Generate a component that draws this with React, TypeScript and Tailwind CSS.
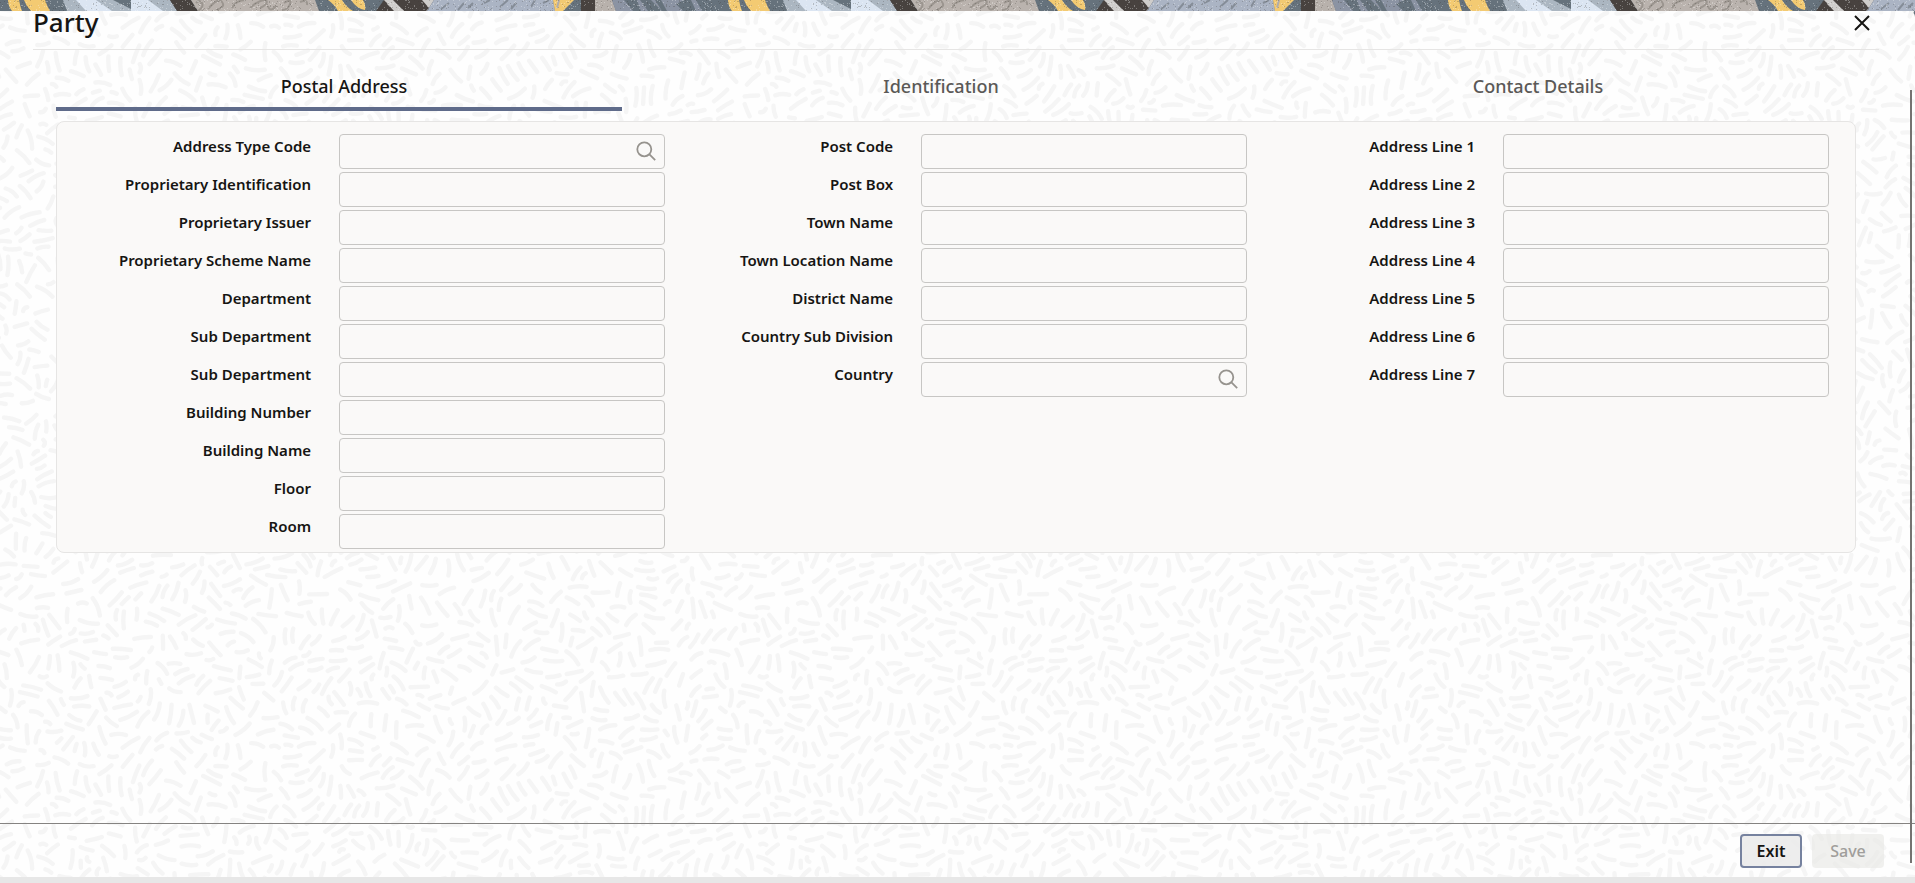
import { useId, useState } from "react";

type Field = { label: string; lookup?: boolean };

const TABS = ["Postal Address", "Identification", "Contact Details"];

const COLUMNS: Field[][] = [
  [
    { label: "Address Type Code", lookup: true },
    { label: "Proprietary Identification" },
    { label: "Proprietary Issuer" },
    { label: "Proprietary Scheme Name" },
    { label: "Department" },
    { label: "Sub Department" },
    { label: "Sub Department" },
    { label: "Building Number" },
    { label: "Building Name" },
    { label: "Floor" },
    { label: "Room" },
  ],
  [
    { label: "Post Code" },
    { label: "Post Box" },
    { label: "Town Name" },
    { label: "Town Location Name" },
    { label: "District Name" },
    { label: "Country Sub Division" },
    { label: "Country", lookup: true },
  ],
  [
    { label: "Address Line 1" },
    { label: "Address Line 2" },
    { label: "Address Line 3" },
    { label: "Address Line 4" },
    { label: "Address Line 5" },
    { label: "Address Line 6" },
    { label: "Address Line 7" },
  ],
];

function makeRandom(seed: number) {
  let s = seed;
  return () => {
    s = (s * 1664525 + 1013904223) % 4294967296;
    return s / 4294967296;
  };
}

const TILE = 720;

/* Short strokes that follow a smooth periodic direction field. */
function buildStrokes(): string {
  const rnd = makeRandom(77);
  const k = (Math.PI * 2) / TILE;
  const angle = (x: number, y: number) =>
    1.9 * Math.sin(k * (3 * x + 2 * y) + 0.6) +
    1.7 * Math.cos(k * (4 * y - 2 * x) + 1.9) +
    0.7 * Math.sin(k * (6 * x - 4 * y) + 4.2);
  const cell = 12;
  const n = TILE / cell;
  const grid: number[][][] = Array.from({ length: n * n }, () => []);
  const wrap = (v: number) => ((v % n) + n) % n;
  const delta = (v: number) => {
    const m = ((v % TILE) + TILE) % TILE;
    return m > TILE / 2 ? m - TILE : m;
  };
  const d: string[] = [];
  const attempts = 60000;
  for (let i = 0; i < attempts; i++) {
    const cx = rnd() * TILE;
    const cy = rnd() * TILE;
    const a = angle(cx, cy) + (rnd() - 0.5) * 0.25;
    const half = i < attempts / 2 ? 5.5 + rnd() * 4 : 2.5 + rnd() * 4;
    const ux = Math.cos(a);
    const uy = Math.sin(a);
    const pts = [-1, -0.5, 0, 0.5, 1].map((t) => [cx + ux * half * t, cy + uy * half * t]);
    const clear = pts.every(([px, py]) => {
      const gx = Math.floor(px / cell);
      const gy = Math.floor(py / cell);
      for (let dx = -1; dx <= 1; dx++)
        for (let dy = -1; dy <= 1; dy++)
          for (const [qx, qy] of grid[wrap(gx + dx) * n + wrap(gy + dy)]) {
            const ex = delta(px - qx);
            const ey = delta(py - qy);
            if (ex * ex + ey * ey < 50) return false;
          }
      return true;
    });
    if (!clear) continue;
    for (const p of pts) grid[wrap(Math.floor(p[0] / cell)) * n + wrap(Math.floor(p[1] / cell))].push(p);
    const bend = (rnd() - 0.5) * 5;
    const f = (v: number) => v.toFixed(1);
    const xs = [0, cx < 14 ? TILE : cx > TILE - 14 ? -TILE : 0];
    const ys = [0, cy < 14 ? TILE : cy > TILE - 14 ? -TILE : 0];
    for (const ox of new Set(xs))
      for (const oy of new Set(ys))
        d.push(
          `M${f(cx - ux * half + ox)} ${f(cy - uy * half + oy)}Q${f(cx - uy * bend + ox)} ${f(cy + ux * bend + oy)} ${f(cx + ux * half + ox)} ${f(cy + uy * half + oy)}`
        );
  }
  return d.join("");
}

const STROKES = buildStrokes();

function buildSpeckles(seed: number, count: number): string {
  const rnd = makeRandom(seed);
  let d = "";
  for (let i = 0; i < count; i++) d += `M${Math.floor(rnd() * 720)} ${Math.floor(rnd() * 11)}h1v1h-1z`;
  return d;
}

const LIGHT_SPECKLES = buildSpeckles(5, 520);
const DARK_SPECKLES = buildSpeckles(11, 420);

function Texture() {
  return (
    <svg className="absolute inset-0 h-full w-full" aria-hidden="true">
      <defs>
        <pattern id="strokes" width="720" height="720" patternUnits="userSpaceOnUse">
          <path d={STROKES} fill="none" stroke="#f5f5f5" strokeWidth="4.4" strokeLinecap="round" />
        </pattern>
      </defs>
      <rect width="100%" height="100%" fill="url(#strokes)" />
    </svg>
  );
}

function Banner() {
  return (
    <svg className="block h-[11px] w-full shrink-0" aria-hidden="true">
      <defs>
        <pattern id="banner" width="720" height="11" patternUnits="userSpaceOnUse">
          <rect width="720" height="11" fill="#66727c" />
          <path d="M8 0H19Q20 6 22 11H12Q8 6 8 0zM24 0H45Q47 6 50 11H31Q26 6 24 0z" fill="#f3ca72" />
          <path d="M63 0H170L177 11H67z" fill="#abb6c1" />
          <path d="M76 0H96L112 11H86zM131 0H148L163 11H131z" fill="#dbe5f2" />
          <path d="M113 0H131V9z" fill="#66727c" />
          <path d="M170 0H191L198 11H177z" fill="#48423f" />
          <path d="M191 0H315L319 11H198z" fill="#bab3ae" />
          <path
            d="M196 3q4-4 6 0t-4 8M208 9q10-12 14-7t-6 8M232 8q4-8 14-8M250 8q8-8 16-8q3 4-6 8M268 6q2 7 8 0M284 3q8-5 6 1t-8 6M300 2q8-3 7 3"
            fill="none"
            stroke="#9b958f"
            strokeWidth="2"
          />
          <path d="M328 0H342Q346 7 353 11H338Q334 4 328 0zM351 0H363Q366 5 365 10Q357 9 351 0z" fill="#f3ca72" />
          <path d="M384 0H434L427 11H376z" fill="#48423f" />
          <path d="M384 0H393L404 11H394zM422 0H434L429 8z" fill="#cfcdcb" />
          <path d="M434 0H553L555 11H427z" fill="#abb4c4" />
          <path
            d="M441 9l8-6M458 10l6-7M468 8l5-5M484 3l6-3M500 7l8-7M511 9l5-6M531 7l4-7M543 3l6-3"
            fill="none"
            stroke="#858d98"
            strokeWidth="2"
          />
          <path d="M553 0H574L563 11H555z" fill="#f3ca72" />
          <path d="M557 8l2-8" stroke="#b1adab" strokeWidth="2" />
          <path d="M581 0H595V11H581z" fill="#48423f" />
          <path d="M595 0H612L616 11H595z" fill="#b8b1ac" />
          <path d="M612 0H624L633 11H616zM637 0H640L648 11H641zM651 0H684L676 4L683 11H662zM691 0H696L702 11H696z" fill="#8b93a3" />
          <path d="M655 0H661L667 11H662z" fill="#66727c" />
          <path d={LIGHT_SPECKLES} fill="#ffffff" opacity="0.3" />
          <path d={DARK_SPECKLES} fill="#3b3733" opacity="0.25" />
        </pattern>
      </defs>
      <rect width="100%" height="11" fill="url(#banner)" />
    </svg>
  );
}

function SearchIcon() {
  return (
    <svg viewBox="0 0 20 20" className="h-5 w-5" fill="none" stroke="#96938e" strokeWidth="1.8" aria-hidden="true">
      <circle cx="8.3" cy="8.3" r="7" />
      <path d="M13.2 13.2L19.2 19.2" />
    </svg>
  );
}

function FieldRow({ label, lookup }: Field) {
  const id = useId();
  return (
    <div className="flex items-start">
      <label htmlFor={id} className="w-[44%] pr-[28px] text-right text-[15px] leading-[24px] font-semibold text-[#161513]">
        {label}
      </label>
      <div className="relative flex-1">
        <input
          id={id}
          type="text"
          className="block h-[35px] w-full rounded-[4px] border border-[#c7c6c4] bg-[#faf9f8] px-3 text-[16px] text-[#161513] outline-none focus:border-[#5f6b8a]"
        />
        {lookup && (
          <button type="button" aria-label={`Search ${label}`} className="absolute top-[7px] right-[9px]">
            <SearchIcon />
          </button>
        )}
      </div>
    </div>
  );
}

export default function App() {
  const [active, setActive] = useState(0);
  return (
    <div className="relative flex min-h-screen flex-col bg-[#66727c] font-['Noto_Sans','Open_Sans',sans-serif] text-[#161513]">
      <Banner />
      <div className="relative flex flex-1 flex-col rounded-tr-[6px] bg-[#fefefe]">
        <Texture />
        <header className="relative mr-[36px] ml-[33px] flex h-[39px] items-start justify-between border-b border-[#e6e5e4]">
          <h1 className="text-[26px] leading-[22px] font-medium">Party</h1>
          <button type="button" aria-label="Close" className="mt-1 mr-[9px]">
            <svg viewBox="0 0 16 16" className="h-4 w-4" stroke="#161513" strokeWidth="2" aria-hidden="true">
              <path d="M1 1L15 15M15 1L1 15" />
            </svg>
          </button>
        </header>

        <main className="relative flex-1 px-[56px]">
          <div role="tablist" className="mr-[43px] grid grid-cols-3 gap-[31px] pt-4">
            {TABS.map((tab, i) => (
              <button
                key={tab}
                type="button"
                role="tab"
                aria-selected={i === active}
                onClick={() => setActive(i)}
                className={
                  i === active
                    ? "h-[45px] border-b-4 border-[#5f6b8a] pl-[10px] text-[18px] font-medium text-[#161513]"
                    : "h-[45px] border-b-4 border-transparent pl-[10px] text-[18px] font-medium text-[#5b5957]"
                }
              >
                {tab}
              </button>
            ))}
          </div>

          <section
            role="tabpanel"
            aria-label={TABS[active]}
            className="mt-[10px] mr-[3px] grid grid-cols-3 rounded-[8px] border border-[#e6e5e4] bg-[#faf9f8] px-[26px] pt-3 pb-[3px]"
          >
            {COLUMNS.map((fields, c) => (
              <div key={c} className="flex flex-col gap-[3px]">
                {fields.map((field, i) => (
                  <FieldRow key={i} {...field} />
                ))}
              </div>
            ))}
          </section>
        </main>

        <footer className="relative flex h-[54px] items-start justify-end gap-[10px] border-t border-[#858381] pt-[10px] pr-[31px]">
          <button
            type="button"
            className="h-[34px] w-[62px] rounded-[4px] border-2 border-[#76829f] bg-[#ebebeb]/90 text-[16px] font-semibold text-[#161513]"
          >
            Exit
          </button>
          <button
            type="button"
            disabled
            className="h-[34px] w-[72px] rounded-[4px] bg-[#e9e9e7]/70 text-[16px] font-medium text-[#a09e9b]"
          >
            Save
          </button>
        </footer>
        <div className="pointer-events-none absolute top-[79px] right-[3px] bottom-[14px] w-[2px] bg-[#757371]" />
      </div>
      <div className="h-[6px] shrink-0 bg-[#e7e7e7]" />
    </div>
  );
}
